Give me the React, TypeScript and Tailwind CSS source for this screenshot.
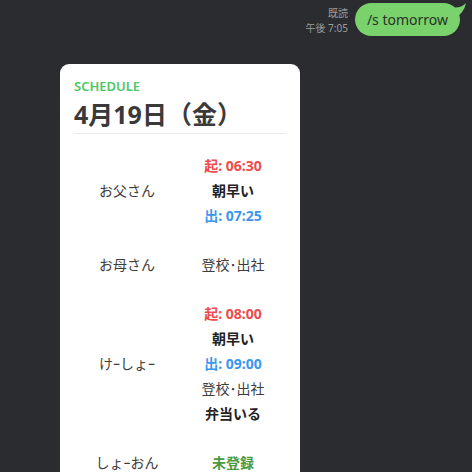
import React from "react";

const font = { fontFamily: '"Noto Sans", "Noto Sans CJK JP", sans-serif' };

type Line = { text: React.ReactNode; cls: string };

const Row = ({ name, lines }: { name: string; lines: Line[] }) => (
  <div className="flex items-center py-3">
    <div className="w-1/2 text-center text-[14px] text-[#3d3d3d]">{name}</div>
    <div className="w-1/2 flex flex-col items-center">
      {lines.map((l, i) => (
        <div key={i} className={"h-[25px] leading-[25px] text-[14px] " + l.cls}>
          {l.text}
        </div>
      ))}
    </div>
  </div>
);

export default function App() {
  const wake = (t: string): Line => ({ text: "起: " + t, cls: "font-bold text-[#ee4b4b]" });
  const out = (t: string): Line => ({ text: "出: " + t, cls: "font-bold text-[#3a97ee]" });
  const early: Line = { text: "朝早い", cls: "font-bold text-[#222]" };
  const school: Line = { text: "登校･出社", cls: "text-[#3d3d3d]" };
  return (
    <div style={font} className="w-[472px] h-[472px] bg-[#2b2c2f] overflow-hidden flex flex-col">
      <div className="flex justify-end items-start pt-[3px] pr-[12px]">
        <div className="flex flex-col items-end text-[10px] leading-[15px] text-[#9c9c9c] mr-[7px] mt-[3px]">
          <span>既読</span>
          <span>午後 7:05</span>
        </div>
        <div className="relative">
          <div className="bg-[#7ad26d] rounded-[17px] h-[33px] px-[12px] flex items-center text-[14px] text-[#283326]">
            /s tomorrow
          </div>
          <svg className="absolute -right-[7px] -top-[1px]" width="16" height="16" viewBox="0 0 16 16">
            <path d="M0 5 Q9 7 15 1 Q13 11 4 16 Z" fill="#7ad26d" />
          </svg>
        </div>
      </div>
      <div className="ml-[60px] mt-[28px] w-[240px] bg-white rounded-[9px] px-[14px] pt-[14px] shrink-0">
        <div className="text-[13px] font-semibold text-[#4cc764] leading-[16px]">SCHEDULE</div>
        <div className="mt-[3px] text-[25px] font-bold text-[#3a3a3a] leading-[34px] pb-[2px] border-b border-[#ececec]">
          4月19日（金）
        </div>
        <div className="pt-[7px]">
          <Row name="お父さん" lines={[wake("06:30"), early, out("07:25")]} />
          <Row name="お母さん" lines={[school]} />
          <Row
            name="けｰしょｰ"
            lines={[wake("08:00"), early, out("09:00"), school, { text: "弁当いる", cls: "font-bold text-[#222]" }]}
          />
          <Row name="しょｰおん" lines={[{ text: "未登録", cls: "font-bold text-[#4a9a3e]" }]} />
        </div>
      </div>
    </div>
  );
}
